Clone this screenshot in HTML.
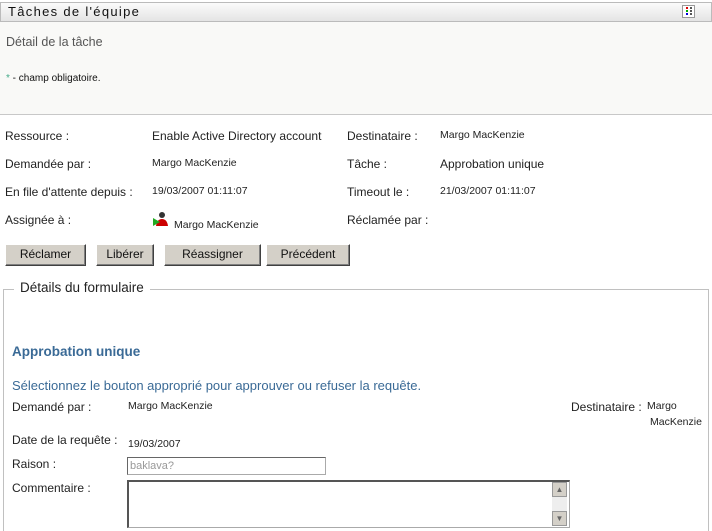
<!DOCTYPE html>
<html style="width:712px;height:531px;overflow:hidden"><head><meta charset="utf-8"><style>
*{margin:0;padding:0;box-sizing:border-box}
body{width:712px;height:531px;background:#fff;font-family:"Liberation Sans","DejaVu Sans",sans-serif;color:#222;position:relative;overflow:hidden}
.a{position:absolute;white-space:nowrap}
.l{font-size:12px;color:#222}
.s{font-size:10.5px;color:#222}
.v{font-size:12px;color:#222}
.b{position:absolute;top:244px;height:22px;background:#d4d0c8;border:1px solid;border-color:#fff #404040 #404040 #fff;box-shadow:inset -1px -1px 0 #808080;font-size:12px;text-align:center;line-height:19px;color:#111}
</style></head><body>
<div class="a" style="left:0;top:2px;width:712px;height:20px;border:1px solid #bbb;background:linear-gradient(#fbfbfb,#e4e4e4)"></div>
<div class="a" style="left:8px;top:4px;font-size:13px;letter-spacing:1.3px;color:#111">Tâches de l'équipe</div>
<div class="a" style="left:682px;top:5px;width:13px;height:13px;border:1px solid #999;background:#fff"></div>
<div class="a" style="left:686px;top:7px;width:2px;height:2px;background:#d00"></div>
<div class="a" style="left:690px;top:7px;width:2px;height:2px;background:#555"></div>
<div class="a" style="left:686px;top:10px;width:2px;height:2px;background:#0a0"></div>
<div class="a" style="left:690px;top:10px;width:2px;height:2px;background:#555"></div>
<div class="a" style="left:686px;top:13px;width:2px;height:2px;background:#00d"></div>
<div class="a" style="left:690px;top:13px;width:2px;height:2px;background:#555"></div>
<div class="a" style="left:0;top:22px;width:712px;height:93px;background:#f9f9f7;border-bottom:1px solid #c8c8c8"></div>
<div class="a" style="left:6px;top:35px;font-size:12.5px;color:#555">Détail de la tâche</div>
<div class="a" style="left:6px;top:73px;font-size:10px;color:#111"><span style="color:#4a8">*</span> - champ obligatoire.</div>

<div class="a l" style="left:5px;top:129px">Ressource :</div>
<div class="a v" style="left:152px;top:129px">Enable Active Directory account</div>
<div class="a l" style="left:347px;top:129px">Destinataire :</div>
<div class="a s" style="left:440px;top:129px">Margo MacKenzie</div>

<div class="a l" style="left:5px;top:157px">Demandée par :</div>
<div class="a s" style="left:152px;top:157px">Margo MacKenzie</div>
<div class="a l" style="left:347px;top:157px">Tâche :</div>
<div class="a v" style="left:440px;top:157px">Approbation unique</div>

<div class="a l" style="left:5px;top:185px">En file d'attente depuis :</div>
<div class="a s" style="left:152px;top:185px">19/03/2007 01:11:07</div>
<div class="a l" style="left:347px;top:185px">Timeout le :</div>
<div class="a s" style="left:440px;top:185px">21/03/2007 01:11:07</div>

<div class="a l" style="left:5px;top:213px">Assignée à :</div>
<svg class="a" style="left:152px;top:211px" width="18" height="16"><circle cx="10" cy="4" r="3" fill="#333"/><path d="M4 15 Q5 8 10 8 Q15 8 16 15Z" fill="#c00"/><path d="M1 7 L8 11 L1 15Z" fill="#2a2"/></svg>
<div class="a s" style="left:174px;top:219px">Margo MacKenzie</div>
<div class="a l" style="left:347px;top:213px">Réclamée par :</div>

<div class="b" style="left:5px;width:81px">Réclamer</div>
<div class="b" style="left:96px;width:58px">Libérer</div>
<div class="b" style="left:164px;width:97px">Réassigner</div>
<div class="b" style="left:266px;width:84px">Précédent</div>

<div class="a" style="left:3px;top:289px;width:706px;height:250px;border:1px solid #c0c0c0"></div>
<div class="a" style="left:14px;top:280px;padding:0 6px;background:#fff;font-size:13.5px;color:#222">Détails du formulaire</div>

<div class="a" style="left:12px;top:344px;font-size:13.5px;font-weight:bold;color:#3a6a96">Approbation unique</div>
<div class="a" style="left:12px;top:378px;font-size:13px;color:#3a6a96">Sélectionnez le bouton approprié pour approuver ou refuser la requête.</div>
<div class="a l" style="left:12px;top:400px">Demandé par :</div>
<div class="a s" style="left:128px;top:400px">Margo MacKenzie</div>
<div class="a l" style="left:571px;top:400px">Destinataire :</div>
<div class="a s" style="left:647px;top:400px">Margo</div>
<div class="a s" style="left:650px;top:416px">MacKenzie</div>
<div class="a l" style="left:12px;top:433px">Date de la requête :</div>
<div class="a s" style="left:128px;top:438px">19/03/2007</div>
<div class="a l" style="left:12px;top:457px">Raison :</div>
<div class="a" style="left:127px;top:457px;width:199px;height:18px;border:1px solid #aaa;border-top-color:#666;border-left-color:#666;font-size:11px;color:#999;padding:2px 2px">baklava?</div>
<div class="a l" style="left:12px;top:481px">Commentaire :</div>
<div class="a" style="left:127px;top:480px;width:443px;height:48px;border:1px solid #aaa;border-top:2px solid #555;border-left:2px solid #555"></div>
<div class="a" style="left:552px;top:482px;width:15px;height:44px;background:#eee"></div>
<div class="a" style="left:552px;top:482px;width:15px;height:15px;background:#d4d0c8;border:1px solid #999;font-size:8px;text-align:center;line-height:13px;color:#666">▲</div>
<div class="a" style="left:552px;top:511px;width:15px;height:15px;background:#d4d0c8;border:1px solid #999;font-size:8px;text-align:center;line-height:13px;color:#666">▼</div>
</body></html>
